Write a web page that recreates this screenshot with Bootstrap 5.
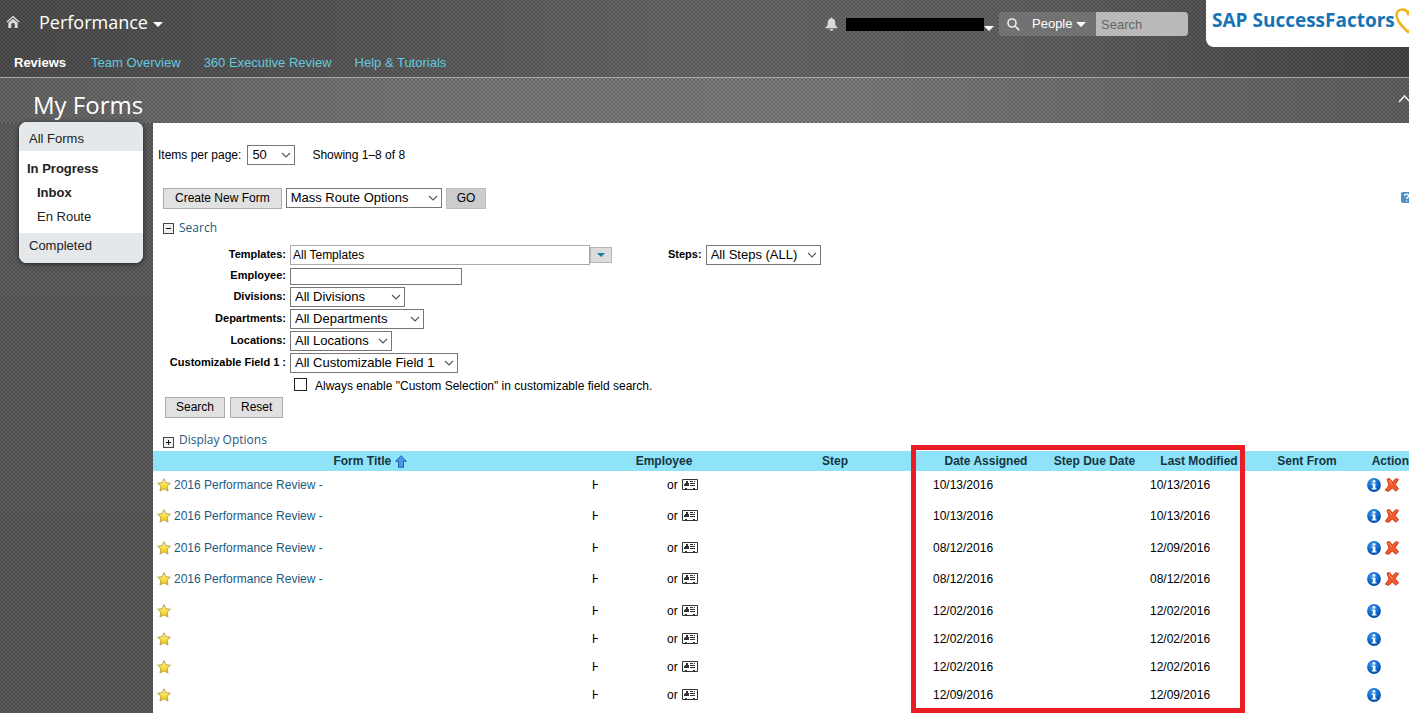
<!DOCTYPE html>
<html lang="en">
<head>
<meta charset="utf-8">
<meta name="viewport" content="width=device-width, initial-scale=1">
<title>Performance - My Forms</title>
<link rel="stylesheet" href="https://cdn.jsdelivr.net/npm/bootstrap@5.3.0/dist/css/bootstrap.min.css">
<style>
body{font:12px/16px "Liberation Sans",Arial,sans-serif;color:#000;background-color:#545454}
.texture{background-image:radial-gradient(circle,rgba(0,0,0,.2) 0 1px,transparent 1px),radial-gradient(circle,rgba(0,0,0,.2) 0 1px,transparent 1px),var(--shade);background-size:4px 4px,4px 4px,100% 100%;background-position:0 0,2px 2px,0 0}
.shell{--shade:linear-gradient(#636363,#5c5c5c)}
.topbar{--shade:linear-gradient(90deg,#505050,#5c5c5c 25%,#6c6c6c 50%,#646464 75%,#484848);border-bottom:1px solid #a8a8a8}
.titlebar{--shade:linear-gradient(90deg,#686868,#7c7c7c 30%,#808080 60%,#646464);height:45px;padding-left:33px}
.toprow{height:48px;padding-left:6px}
.module{font:18px/24px "Open Sans",sans-serif;color:#fff;margin-left:19px}
.module .caret{margin-left:5px}
.caret{width:0;height:0;border:5px solid transparent;border-top-color:#fff;border-bottom:0}
.tabs{height:29px;gap:23px;padding:1px 0 0 14px;font-size:13px}
.tabs a{color:#64c8df;text-decoration:none}
.tabs a.current{color:#fff;font-weight:bold;padding-right:2px}
.redacted{width:138px;height:13px;background:#000}
.finder{height:24px;border-radius:4px;overflow:hidden;background:#727272;width:189px;margin-left:5px;margin-right:18px}
.finder button{background:none;border:0;color:#fff;font:13px/16px "Liberation Sans",sans-serif}
.finder input{background:#b9b9b9;border:0;width:92px;height:24px;padding:0 5px;font-size:13px}
.finder input::placeholder{color:#666;opacity:1}
.brandbox{width:203px;height:47px;background:#fff;border-bottom-left-radius:8px;padding-left:6px}
.brandname{font:bold 19px/24px "Open Sans",sans-serif;color:#1673b5;white-space:nowrap}
.title{font:24px/32px "Open Sans",sans-serif;color:#fff}
.side{width:124px;border-radius:8px;overflow:hidden;background:#fff;font-size:13px;margin:-1px 10px 0 19px;box-shadow:0 1px 5px #222}
.side a{display:block;color:#222;text-decoration:none;line-height:24px}
.side .band{background:#e4e8eb;padding:5px 10px 0;height:29px}
.side .band.last-band{padding-top:1px;height:30px}
.side .group{padding:6px 8px 0;height:82px}
.side .nest{padding-left:10px}
.panel{background:#fff;min-width:0;padding-top:22px}
.link{color:#1c5a80;text-decoration:none}
.pick{width:auto;height:20px;padding:0 22px 1px 4px;border:1px solid #767676;border-radius:0;font-size:13px;line-height:16px;color:#000;background:#fff url("data:image/svg+xml,%3Csvg xmlns='http://www.w3.org/2000/svg' viewBox='0 0 10 10'%3E%3Cpath d='M1 3l4 4 4-4' fill='none' stroke='%23555' stroke-width='1.1'/%3E%3C/svg%3E") no-repeat right 3px center/10px 10px}
.push{height:21px;border:1px solid #adadad;border-radius:0;background:#e1e1e1;padding:0 10px 1px;font-size:12px;line-height:16px;color:#000}
.push.wide{padding:0 11px 1px}
.push.dim{background:#ccc;border-color:#bbb}
.paging{padding-left:5px}
#per{width:48px;margin:0 17px 0 6px}
.tools{gap:4px;padding-left:10px;margin-top:23px}
.mass{width:156px}
.fold{height:18px;gap:5px;padding-left:10px;font:12px/18px "Open Sans",sans-serif}
.fold span{width:11px;height:11px;border:1px solid #444;background:#f0f0f0}
.finding{margin-top:10px}
.opts{margin-top:13px}
.filterform{margin-top:7px}
.filters{display:grid;grid-template-columns:133px auto;column-gap:4px;grid-template-rows:22px 20px repeat(4,22px) 23px;align-items:center;justify-content:start}
.cap{font-size:11px;font-weight:bold;text-align:right;padding-bottom:2px}
.steps{margin-left:56px}
.field{border:1px solid #767676;border-radius:0;padding:0 2px;font-size:12px;background:#fff;color:#000}
.combo{width:300px;height:20px;border-color:#aaa}
.combobtn{width:22px;height:16px;border:1px solid #b5b5b5;background:#dcdcdc;padding:0}
.combobtn i{border-width:4px;border-bottom:0;border-top-color:#1b7c9e}
.emp{width:172px;height:17px}
.w-div{width:115px}.w-dep{width:134px}.w-loc{width:102px}.w-cus{width:168px}
.tick{appearance:none;width:13px;height:13px;border:1px solid #222;background:#fff;margin:0}
.actions{gap:5px;padding-left:12px}
.listing{margin-top:2px}
.forms{table-layout:fixed;width:100%;border-collapse:collapse}
.forms th{height:20px;padding:0;background:#8ee3f8;text-align:center;color:#163540;line-height:20px}
.forms td{vertical-align:top;padding:6px 4px 0;height:28px;line-height:16px}
.forms tr.tall td{height:31px}
.forms tr.taller td{height:32px}
.forms td.acts{padding:7px 5px 0}
.forms td.who{padding-left:5px}
.forms svg{flex:none}
.title-link{padding-left:3px}
.erased{width:75px}
.erased::after{content:"";position:absolute;left:6px;top:0;width:8px;height:16px;background:#fff}
.marker{position:absolute;top:-6px;right:164px;bottom:0;width:334px;border:5px solid #ea1c24;pointer-events:none}
</style>
</head>
<body>
<svg width="0" height="0" class="position-absolute" aria-hidden="true">
<defs>
<linearGradient id="gold" x1="0" y1="0" x2="0" y2="1"><stop offset="0" stop-color="#fff6b8"/><stop offset=".6" stop-color="#f8dc32"/><stop offset="1" stop-color="#eec21a"/></linearGradient>
<radialGradient id="blue" cx=".4" cy=".3" r=".8"><stop offset="0" stop-color="#3f9cec"/><stop offset=".6" stop-color="#0b63c5"/><stop offset="1" stop-color="#063f97"/></radialGradient>
<symbol id="star" viewBox="0 0 14 14"><path d="M7 .7l1.900 4 4.500.5-3.300 3 .9 4.900L7 10.800 3 13.100l.9-4.900-3.300-3 4.500-.5z" fill="url(#gold)" stroke="#b0903a" stroke-width=".8" stroke-linejoin="round"/></symbol>
<symbol id="info" viewBox="0 0 14 14"><circle cx="7" cy="7" r="6.900" fill="url(#blue)"/><rect x="5.600" y="2.300" width="2.800" height="2.200" rx=".6" fill="#fff"/><path d="M4.800 5.500h3.600v4.700h1.100v1.300H4.700v-1.300h1.200V6.800H4.800z" fill="#fff"/></symbol>
<symbol id="del" viewBox="0 0 14 14"><path d="M2 1.200L4.600.6l2.700 3.500L10.800.7l2.700.7-3.300 5.300 3.300 4-2.500 2.600-3.800-3.300-3.600 3.400-3.200-1.100L4 7z" fill="#f4592c" stroke="#c53012" stroke-width=".9" stroke-linejoin="round"/><path d="M3.600 2l3.500 4.200" stroke="#ff9b70"/></symbol>
<symbol id="cardicon" viewBox="0 0 16 12"><path d="M.5.5h15v10H.500z" fill="#fff" stroke="#333"/><path d="M4 2h2v2h1v3H2V5h1V4h1zM8 2h3v1H8zM12 2h1v1h-1zM8 4h5v1H8zM8 6h5v1H8zM3 9h2v2H3zM11 9h2v2h-2z" fill="#333"/></symbol>
</defs></svg>

<div class="shell texture min-vh-100 d-flex flex-column overflow-hidden">
<header class="topbar texture">
 <div class="toprow d-flex align-items-center">
  <a href="#" aria-label="Home" class="d-flex"><svg width="14" height="14" viewBox="0 0 14 14" fill="#ddd" class="mb-1"><path d="M7 .7L.4 6.500l1 1L7 2.600l5.600 4.900 1-1z"/><path d="M7 3.700l4.700 4.100V13H8.700V9.500a1.700 1.700 0 0 0-3.400 0V13h-3V7.800z"/></svg></a>
  <button class="module btn border-0 rounded-0 d-flex align-items-center p-0 pb-1">Performance<span class="caret mt-1"></span></button>
  <div class="d-flex align-items-center ms-auto">
   <svg width="13" height="14" viewBox="0 0 14 14" fill="#d8d8d8"><path d="M7 0a1 1 0 0 1 1 1c2.300.6 3 2.200 3 4.500 0 2.700.7 3.800 2.500 5.300v.7H.5v-.7C2.300 9.300 3 8.200 3 5.500 3 3.200 3.700 1.600 6 1a1 1 0 0 1 1-1zM5 12.300h4a2 2 0 0 1-4 0z"/></svg>
   <span class="redacted flex-shrink-0 ms-2 mt-1 mb-1"></span><span class="caret mt-2"></span>
   <div class="finder d-flex align-items-center">
    <svg class="ms-2 flex-shrink-0" width="13" height="13" viewBox="0 0 13 13" fill="none" stroke="#eee" stroke-width="1.600"><circle cx="5" cy="5" r="4"/><path d="M8 8l4.300 4.300"/></svg>
    <button class="d-flex align-items-center gap-1 p-0 ms-2 ps-1 me-auto">People<span class="caret"></span></button>
    <input type="text" placeholder="Search" aria-label="Search people">
   </div>
  </div>
  <div class="brandbox d-flex overflow-hidden align-self-start">
   <span class="brandname pt-2">SAP SuccessFactors</span>
   <svg class="mt-2 flex-shrink-0" width="26" height="26" viewBox="0 0 26 26" fill="none" stroke="#eeb21c" stroke-width="2.400"><path d="M13 24C7 18 1.500 13 1.500 7.500c0-7 9-8 11.500-2 2.500-6 11.500-5 11.500 2C24.500 13 19 18 13 24z"/></svg>
  </div>
 </div>
 <nav class="tabs d-flex align-items-center"><a href="#" class="current">Reviews</a><a href="#">Team Overview</a><a href="#">360 Executive Review</a><a href="#">Help &amp; Tutorials</a></nav>
</header>
<div class="titlebar texture d-flex align-items-center justify-content-between"><h1 class="title m-0 pt-2">My Forms</h1>
 <svg width="10" height="10" viewBox="0 0 10 10" fill="none" stroke="#eee" stroke-width="1.600" class="mb-1"><path d="M0 8l5.500-6 5.500 6"/></svg></div>
<div class="d-flex flex-grow-1">
 <nav class="side flex-shrink-0 align-self-start">
  <div class="band"><a href="#">All Forms</a></div>
  <div class="group"><a href="#" class="fw-bold">In Progress</a><div class="nest"><a href="#" class="fw-bold">Inbox</a><a href="#">En Route</a></div></div>
  <div class="band last-band"><a href="#">Completed</a></div>
 </nav>
 <main class="panel flex-grow-1 d-flex flex-column">
  <div class="paging d-flex align-items-center"><label for="per">Items per page:</label><select id="per" class="pick form-select"><option>50</option></select><span>Showing 1–8 of 8</span></div>
  <div class="tools d-flex align-items-start">
   <button class="push wide">Create New Form</button><select class="pick mass form-select" aria-label="Mass route"><option>Mass Route Options</option></select><button class="push dim">GO</button>
   <a href="#" class="ms-auto pt-1" aria-label="Help"><svg class="d-block" width="8" height="11" viewBox="0 0 8 11"><rect width="12" height="11" rx="2" fill="#4d8fc9"/><path d="M3.500 4c0-2.500 4-2.500 4 0 0 1.500-2 1.300-2 3M5.500 8.500v1" fill="none" stroke="#fff" stroke-width="1.300"/></svg></a>
  </div>
  <div class="fold finding d-flex align-items-center"><span><svg class="d-block" width="9" height="9" stroke="#111"><path d="M2 4.500h5"/></svg></span><a href="#" class="link">Search</a></div>
  <form class="filterform" onsubmit="return false">
   <div class="filters">
    <label class="cap" for="tp">Templates:</label>
    <div class="d-flex align-items-center"><input id="tp" class="field combo" value="All Templates"><button class="combobtn d-flex align-items-center justify-content-center" aria-label="Show templates"><i class="caret"></i></button><label class="cap steps" for="st">Steps:</label><select id="st" class="pick form-select ms-1 w-div"><option>All Steps (ALL)</option></select></div>
    <label class="cap" for="em">Employee:</label><input id="em" class="field emp">
    <label class="cap" for="dv">Divisions:</label><div><select id="dv" class="pick form-select w-div"><option>All Divisions</option></select></div>
    <label class="cap" for="dp">Departments:</label><div><select id="dp" class="pick form-select w-dep"><option>All Departments</option></select></div>
    <label class="cap" for="lc">Locations:</label><div><select id="lc" class="pick form-select w-loc"><option>All Locations</option></select></div>
    <label class="cap" for="cf">Customizable Field 1 :</label><div><select id="cf" class="pick form-select w-cus"><option>All Customizable Field 1</option></select></div>
    <span></span><div class="d-flex gap-2 ps-1"><input type="checkbox" class="tick" id="al"><label for="al">Always enable "Custom Selection" in customizable field search.</label></div>
   </div>
   <div class="d-flex actions"><button class="push">Search</button><button class="push">Reset</button></div>
  </form>
  <div class="fold opts d-flex align-items-center"><span class="mt-1"><svg class="d-block" width="9" height="9" stroke="#111"><path d="M2 4.500h5M4.500 2v5"/></svg></span><a href="#" class="link">Display Options</a></div>
  <div class="position-relative flex-grow-1 listing">
   <table class="forms">
    <colgroup><col><col style="width:154px"><col style="width:188px"><col style="width:114px"><col style="width:103px"><col style="width:106px"><col style="width:110px"><col style="width:47px"></colgroup>
    <thead><tr><th>Form Title <svg width="12" height="13" viewBox="0 0 12 13"><path d="M6 .7l5.300 5.600H8.500v6h-5v-6H.7z" fill="#4a97e6" stroke="#2260b0"/></svg></th><th>Employee</th><th>Step</th><th>Date Assigned</th><th>Step Due Date</th><th>Last Modified</th><th>Sent From</th><th class="text-end">Action</th></tr></thead>
    <tbody id="rows"></tbody>
   </table>
   <div class="marker"></div>
  </div>
 </main>
</div>
</div>
<script>
const data=[["10/13/2016","10/13/2016",1],["10/13/2016","10/13/2016",1],["08/12/2016","12/09/2016",1],["08/12/2016","08/12/2016",1],["12/02/2016","12/02/2016",0],["12/02/2016","12/02/2016",0],["12/02/2016","12/02/2016",0],["12/09/2016","12/09/2016",0]];
const icon=(id,w,h)=>`<svg width="${w}" height="${h}"><use href="#${id}"/></svg>`;
document.getElementById("rows").innerHTML=data.map((r,i)=>`<tr class="${r[2]?(i%2?"taller":"tall"):""}">
<td><div class="d-flex align-items-center">${icon("star",14,14)}${r[2]?'<a href="#" class="link title-link">2016 Performance Review -</a>':'<span>&nbsp;</span>'}</div></td>
<td class="who"><div class="d-flex align-items-center"><span class="erased position-relative">H</span><span class="me-1">or</span>${icon("cardicon",16,12)}</div></td><td></td>
<td>${r[0]}</td><td></td><td>${r[1]}</td><td></td>
<td class="acts"><div class="d-flex gap-1">${icon("info",14,14)}${r[2]?icon("del",14,14):""}</div></td></tr>`).join("");
</script>
<script src="https://cdn.jsdelivr.net/npm/bootstrap@5.3.0/dist/js/bootstrap.bundle.min.js"></script>
</body>
</html>
